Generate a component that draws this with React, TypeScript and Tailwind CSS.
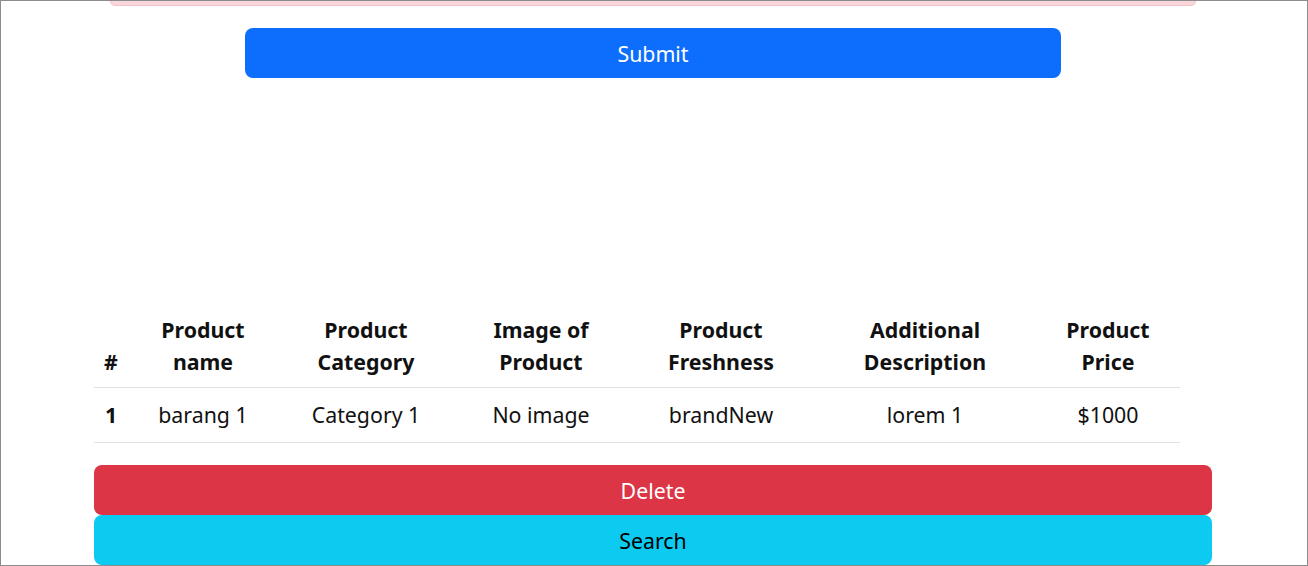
import React from "react";

const columns = [
  { label: "#", width: "w-[34px]" },
  { label: "Product name", width: "w-[150px]" },
  { label: "Product Category", width: "w-[176px]" },
  { label: "Image of Product", width: "w-[174px]" },
  { label: "Product Freshness", width: "w-[186px]" },
  { label: "Additional Description", width: "w-[222px]" },
  { label: "Product Price", width: "w-[144px]" },
];

const rows = [
  {
    no: 1,
    name: "barang 1",
    category: "Category 1",
    image: "No image",
    freshness: "brandNew",
    description: "lorem 1",
    price: "$1000",
  },
];

export default function App() {
  return (
    <div
      className="w-[1308px] h-[566px] overflow-hidden border border-[#8c8c8c] bg-white text-[#111]"
      style={{ fontFamily: '"Noto Sans", "Open Sans", sans-serif' }}
    >
      {/* alert box, mostly scrolled out of view */}
      <div className="ml-[109px] w-[1086px] h-[5px] rounded-b-md border border-t-0 border-[#f5c2c7] bg-[#f8d7da]" />

      <button className="mt-[22px] ml-[244px] w-[816px] h-[50px] pt-[2px] rounded-lg bg-[#0d6efd] text-[21.33px] text-white">
        Submit
      </button>

      <table className="mt-[224px] ml-[93px] w-[1086px] table-fixed border-collapse text-[21.33px] leading-[32px]">
        <thead>
          <tr className="border-b border-[#dee2e6]">
            {columns.map((c) => (
              <th key={c.label} className={`${c.width} px-2 pt-3 pb-[9px] align-bottom text-center font-bold`}>
                {c.label}
              </th>
            ))}
          </tr>
        </thead>
        <tbody>
          {rows.map((r) => (
            <tr key={r.no} className="border-b border-[#dee2e6]">
              <td className="px-1 py-[11px] text-center font-bold">{r.no}</td>
              <td className="px-2 py-[11px] text-center">{r.name}</td>
              <td className="px-2 py-[11px] text-center">{r.category}</td>
              <td className="px-2 py-[11px] text-center">{r.image}</td>
              <td className="px-2 py-[11px] text-center">{r.freshness}</td>
              <td className="px-2 py-[11px] text-center">{r.description}</td>
              <td className="px-2 py-[11px] text-center">{r.price}</td>
            </tr>
          ))}
        </tbody>
      </table>

      <div className="mt-[22px] ml-[93px] w-[1118px] flex flex-col">
        <button className="h-[50px] pt-[2px] rounded-lg bg-[#dc3545] text-[21.33px] text-white">Delete</button>
        <button className="h-[50px] pt-[2px] rounded-lg bg-[#0dcaf0] text-[21.33px] text-black">Search</button>
      </div>
    </div>
  );
}
